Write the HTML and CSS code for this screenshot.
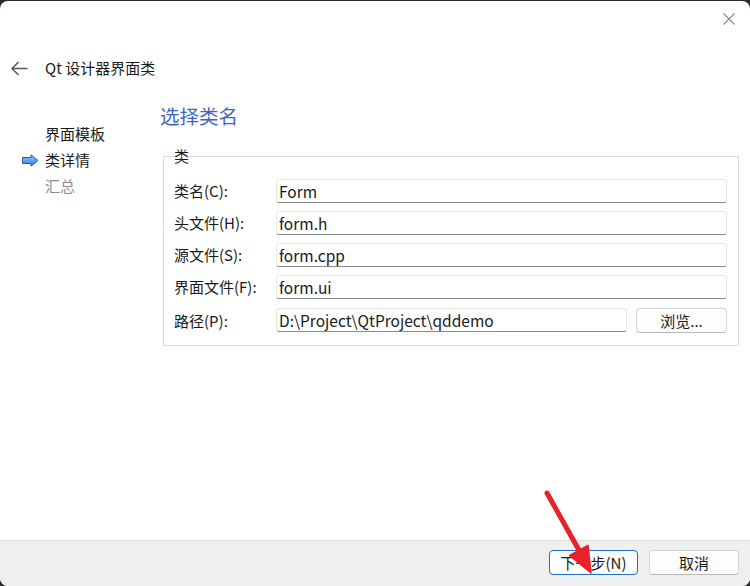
FILE: index.html
```html
<!DOCTYPE html>
<html lang="zh">
<head>
<meta charset="utf-8">
<title>Qt 设计器界面类</title>
<link rel="stylesheet" href="styles.css">
</head>
<body>
<div class="window">
  <div class="titlebar">
    <svg class="close" width="12" height="12" viewBox="0 0 12 12"><path d="M0.5 0.5 L11.5 11.5 M11.5 0.5 L0.5 11.5" stroke="#8a8a8a" stroke-width="1.1" fill="none"/></svg>
  </div>
  <div class="header">
    <svg class="back" width="18" height="15" viewBox="0 0 18 15"><path d="M17 7.5 H2 M8 1.5 L2 7.5 L8 13.5" stroke="#5a5a5a" stroke-width="1.6" fill="none" stroke-linecap="round" stroke-linejoin="round"/></svg>
    <span class="title">Qt 设计器界面类</span>
  </div>
  <div class="main">
    <ul class="nav">
      <li class="nav-item">界面模板</li>
      <li class="nav-item current">
        <svg class="cur-icon" width="17" height="13" viewBox="0 0 17 13">
          <defs><linearGradient id="g" x1="0" y1="0" x2="0" y2="1"><stop offset="0" stop-color="#9cc7ff"/><stop offset="1" stop-color="#2f78e0"/></linearGradient></defs>
          <path d="M0.5 3.5 H9 V0.8 L16 6.5 L9 12.2 V9.5 H0.5 Z" fill="url(#g)" stroke="#2a5aa8" stroke-width="1"/>
        </svg>类详情</li>
      <li class="nav-item muted">汇总</li>
    </ul>
    <div class="content">
      <h1 class="heading">选择类名</h1>
      <fieldset class="group">
        <legend class="legend">类</legend>
        <div class="form">
          <label class="lbl">类名(C):</label>
          <div class="input">Form</div>
          <label class="lbl">头文件(H):</label>
          <div class="input">form.h</div>
          <label class="lbl">源文件(S):</label>
          <div class="input">form.cpp</div>
          <label class="lbl">界面文件(F):</label>
          <div class="input">form.ui</div>
          <label class="lbl path-lbl">路径(P):</label>
          <div class="path-row">
            <div class="input path">D:\Project\QtProject\qddemo</div>
            <button class="btn browse">浏览...</button>
          </div>
        </div>
      </fieldset>
    </div>
  </div>
  <div class="footer">
    <button class="btn primary">下一步(N)</button>
    <button class="btn">取消</button>
  </div>
  <svg class="red-arrow" width="70" height="100" viewBox="0 0 70 100">
    <path d="M6 7 L39 66" stroke="#e8212b" stroke-width="5" stroke-linecap="round" fill="none"/>
    <path d="M50 87 L47 59.5 L28.5 69.5 Z" fill="#e8212b" stroke="#e8212b" stroke-width="1.5" stroke-linejoin="round"/>
  </svg>
</div>
</body>
</html>
```

FILE: styles.css
```css
html, body {
  margin: 0;
  padding: 0;
  background: #2b2b2b;
}
body {
  width: 750px;
  height: 586px;
  overflow: hidden;
  font-family: "Noto Sans CJK SC", "Noto Sans", sans-serif;
  font-size: 15px;
  color: #1a1a1a;
}
.window {
  position: relative;
  margin-top: 1px;
  height: 585px;
  background: #ffffff;
  border-radius: 8px;
  overflow: hidden;
  display: flex;
  flex-direction: column;
}
.titlebar {
  height: 47px;
  display: flex;
  justify-content: flex-end;
  align-items: flex-start;
  flex: none;
}
.close {
  margin-top: 12px;
  margin-right: 15px;
}
.header {
  height: 40px;
  display: flex;
  align-items: center;
  flex: none;
}
.back {
  margin-left: 10px;
  margin-right: 17px;
}
.title {
  font-size: 15px;
  line-height: 20px;
}
.main {
  flex: 1;
  display: flex;
  min-height: 0;
}
.nav {
  list-style: none;
  margin: 0;
  padding: 33px 0 0 0;
  width: 160px;
  flex: none;
}
.nav-item {
  position: relative;
  padding-left: 45px;
  line-height: 26px;
  height: 26px;
  font-size: 15px;
}
.nav-item.muted {
  color: #8c8c8c;
}
.cur-icon {
  position: absolute;
  left: 22px;
  top: 7px;
}
.content {
  flex: 1;
  padding-top: 15px;
  padding-right: 11px;
}
.heading {
  margin: 0 0 19px 0;
  font-size: 19.5px;
  line-height: 25px;
  font-weight: normal;
  color: #3f63c6;
}
.group {
  margin: 0 0 0 3px;
  padding: 14px 11px 12px 10px;
  border: 1px solid #dcdcdc;
  border-radius: 0;
}
.legend {
  padding: 0;
  font-size: 15px;
  line-height: 18px;
}
.form {
  display: grid;
  grid-template-columns: 102px 1fr;
  row-gap: 8px;
  align-items: center;
}
.lbl {
  font-size: 15px;
  line-height: 24px;
}
.path-lbl {
  margin-top: 1px;
}
.input {
  box-sizing: border-box;
  height: 24px;
  line-height: 22px;
  padding-left: 2px;
  background: #ffffff;
  border: 1px solid #e6e6e6;
  border-bottom-color: #8a8a8a;
  border-radius: 3px;
  font-size: 15.5px;
  color: #1a1a1a;
  white-space: nowrap;
}
.path-row {
  display: flex;
  gap: 9px;
  margin-top: 1px;
}
.path {
  flex: 1;
}
.btn {
  box-sizing: border-box;
  font-family: "Noto Sans CJK SC", "Noto Sans", sans-serif;
  font-size: 15px;
  color: #1a1a1a;
  background: #fdfdfd;
  border: 1px solid #d6d6d6;
  border-bottom-color: #b8b8b8;
  border-radius: 4px;
  height: 25px;
  padding: 0;
  line-height: 22px;
}
.browse {
  width: 91px;
}
.footer {
  flex: none;
  height: 46px;
  box-sizing: border-box;
  background: #efefef;
  border-top: 1px solid #dddddd;
  display: flex;
  justify-content: flex-end;
  align-items: flex-start;
  gap: 11px;
  padding: 9px 11px 0 0;
}
.footer .btn {
  width: 90px;
}
.footer .btn.primary {
  width: 89px;
  border: 1px solid #1f6fc4;
}
.red-arrow {
  position: absolute;
  left: 541px;
  top: 485px;
}
```
